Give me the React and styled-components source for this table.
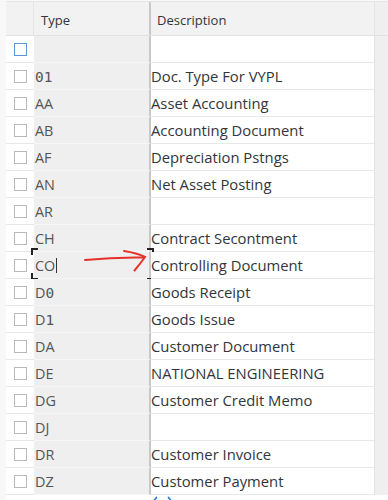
import React from "react";
import styled, { createGlobalStyle } from "styled-components";

const GlobalStyle = createGlobalStyle`
  body {
    margin: 0;
    background: #f8f8f8;
    font-family: "Open Sans", "Noto Sans", sans-serif;
  }
`;

const rows = [
  { type: "", desc: "", head: true },
  { type: "01", desc: "Doc. Type For VYPL" },
  { type: "AA", desc: "Asset Accounting" },
  { type: "AB", desc: "Accounting Document" },
  { type: "AF", desc: "Depreciation Pstngs" },
  { type: "AN", desc: "Net Asset Posting" },
  { type: "AR", desc: "" },
  { type: "CH", desc: "Contract Secontment" },
  { type: "CO", desc: "Controlling Document", focus: true },
  { type: "D0", desc: "Goods Receipt" },
  { type: "D1", desc: "Goods Issue" },
  { type: "DA", desc: "Customer Document" },
  { type: "DE", desc: "NATIONAL ENGINEERING" },
  { type: "DG", desc: "Customer Credit Memo" },
  { type: "DJ", desc: "" },
  { type: "DR", desc: "Customer Invoice" },
  { type: "DZ", desc: "Customer Payment" },
];

const Page = styled.div`
  position: relative;
  width: 388px;
  height: 500px;
  overflow: hidden;
  padding: 1px 0 0 6px;
  box-sizing: border-box;
`;

const Table = styled.div`
  display: flex;
  flex-direction: column;
  background: #fff;
  height: 100%;
`;

const Row = styled.div`
  display: grid;
  grid-template-columns: 28px 117px 224px 13px;
  flex: none;
  height: ${(p) => (p.$header ? "35px" : "27px")};
  box-sizing: border-box;
  border-top: ${(p) => (p.$header ? "1px solid #e6e6e6" : "none")};
  border-bottom: ${(p) => (p.$header ? "1px solid #e2e2e2" : "none")};
`;

const Cell = styled.div`
  display: flex;
  align-items: center;
  box-sizing: border-box;
  min-width: 0;
  position: relative;
  font-size: 14.8px;
  color: #32363a;
  white-space: nowrap;
`;

const HeadCell = styled(Cell)`
  background: #f2f2f2;
  font-size: 13px;
  padding: 3px 0 0 ${(p) => p.$pad || 0}px;
  border-right: ${(p) => p.$sep || "none"};
`;

const CheckCell = styled(Cell)`
  justify-content: center;
  background: #fff;
  border-bottom: 1px solid #e8e8e8;
`;

const TypeCell = styled(Cell)`
  background: #efefef;
  border-right: 2px solid #c8c8c8;
  border-bottom: 1px solid #f6f6f6;
  padding-left: 1px;
  font-size: 14.4px;
  color: #555;
`;

const Digit = styled.span`
  font-family: "DejaVu Sans Mono", monospace;
`;

const DescCell = styled(Cell)`
  background: #fff;
  border-right: 1px solid #e2e2e2;
  border-bottom: 1px solid #e8e8e8;
`;

const Filler = styled.div`
  background: ${(p) => (p.$white ? "#fff" : "#efefef")};
`;

const Box = styled.span`
  width: 13px;
  height: 13px;
  box-sizing: border-box;
  border: 1px solid ${(p) => (p.$active ? "#5f95d6" : "#b9b9b9")};
  background: #fff;
`;

const Caret = styled.span`
  display: inline-block;
  width: 1px;
  height: 15px;
  margin-left: 1px;
  background: #333;
`;

const Corner = styled.span`
  position: absolute;
  width: 5px;
  height: 5px;
  border-color: #222;
  border-style: solid;
  border-width: 0;
  ${(p) => (p.$top ? "top: -4px; border-top-width: 2px;" : "bottom: -2px; border-bottom-width: 2px;")}
  ${(p) => (p.$left ? "left: -3px; border-left-width: 2px;" : "right: -5px; border-right-width: 2px;")}
`;

const PagerRow = styled(Row)`
  height: auto;
  flex: 1;
`;

const Pager = styled.div`
  display: flex;
  gap: 7px;
  padding: 1px 0 0 1px;
  color: #0a6ed1;
`;

const Annotation = styled.svg`
  position: absolute;
  left: 0;
  top: 0;
  pointer-events: none;
`;

// digits in the key column are shown in a mono face (dotted zero)
const TypeText = ({ value }) => (
  <span>
    {value.split("").map((ch, i) =>
      /[0-9]/.test(ch) ? <Digit key={i}>{ch}</Digit> : ch
    )}
  </span>
);

const Chevron = ({ dir }) => (
  <svg width="7" height="10" viewBox="0 0 7 10">
    <path
      d={dir === "left" ? "M5 1 L1.5 5 L5 9" : "M2 1 L5.5 5 L2 9"}
      fill="none"
      stroke="currentColor"
      strokeWidth="1.4"
    />
  </svg>
);

export default function App() {
  return (
    <>
      <GlobalStyle />
      <Page>
        <Table>
          <Row $header>
            <HeadCell $sep="1px solid #e4e4e4" />
            <HeadCell $pad={7} $sep="2px solid #c8c8c8">Type</HeadCell>
            <HeadCell $pad={6} $sep="1px solid #e4e4e4">Description</HeadCell>
            <Filler />
          </Row>
          {rows.map((r, i) => (
            <Row key={i}>
              <CheckCell>
                <Box $active={r.head} />
              </CheckCell>
              <TypeCell>
                <TypeText value={r.type} />
                {r.focus && (
                  <>
                    <Caret />
                    <Corner $top $left />
                    <Corner $top />
                    <Corner $left />
                    <Corner />
                  </>
                )}
              </TypeCell>
              <DescCell>
                <span>{r.desc}</span>
              </DescCell>
              <Filler />
            </Row>
          ))}
          <PagerRow>
            <div />
            <div />
            <Pager>
              <Chevron dir="left" />
              <Chevron dir="right" />
            </Pager>
            <Filler $white />
          </PagerRow>
        </Table>
        <Annotation width="388" height="500" viewBox="0 0 388 500">
          <g fill="none" stroke="#e5322b" strokeWidth="2" strokeLinecap="round">
            <path d="M85 260 Q114 257 144 257.5" />
            <path d="M124 251 Q137 253 145 257 Q140 264 134.5 270.5" />
          </g>
        </Annotation>
      </Page>
    </>
  );
}
